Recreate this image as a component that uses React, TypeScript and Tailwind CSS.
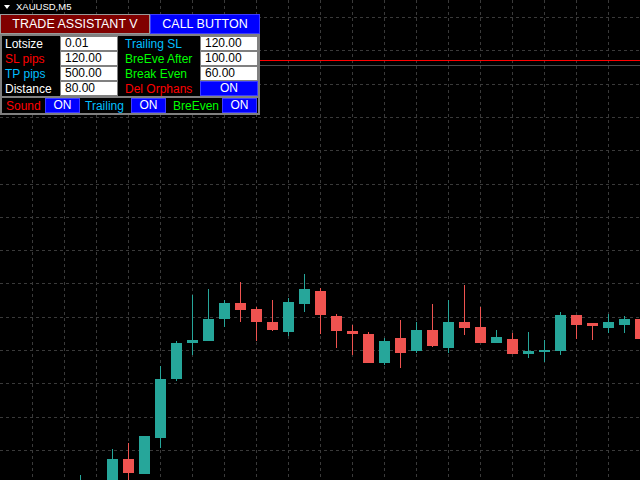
import React from 'react';

type Candle = [number, number, number, number, number, boolean];

// cx, wickTop, bodyTop, bodyBottom, wickBottom, bullish
const candles: Candle[] = [
  [80, 475, 480, 480, 480, true],
  [112, 449, 459, 480, 480, true],
  [128, 443, 459, 473, 480, false],
  [144, 436, 436, 474, 474, true],
  [160, 366, 379, 438, 448, true],
  [176, 341, 343, 379, 381, true],
  [192, 295, 340, 343, 355, true],
  [208, 289, 319, 341, 341, true],
  [224, 300, 303, 319, 327, true],
  [240, 282, 303, 310, 322, false],
  [256, 307, 309, 322, 341, false],
  [272, 300, 322, 330, 331, false],
  [288, 298, 302, 332, 336, true],
  [304, 274, 289, 304, 312, true],
  [320, 288, 291, 315, 334, false],
  [336, 314, 316, 331, 348, false],
  [352, 325, 331, 334, 355, false],
  [368, 332, 334, 363, 363, false],
  [384, 338, 341, 363, 365, true],
  [400, 320, 338, 353, 368, false],
  [416, 322, 330, 351, 353, true],
  [432, 304, 330, 346, 347, false],
  [448, 300, 322, 348, 353, true],
  [464, 285, 322, 328, 335, false],
  [480, 307, 327, 343, 343, false],
  [496, 330, 337, 343, 343, true],
  [512, 333, 339, 354, 354, false],
  [528, 332, 351, 354, 358, true],
  [544, 340, 350, 352, 362, true],
  [560, 312, 315, 351, 355, true],
  [576, 315, 315, 325, 339, false],
  [592, 323, 323, 326, 340, false],
  [608, 314, 322, 328, 333, true],
  [624, 316, 319, 325, 333, true],
  [640, 319, 319, 339, 339, false],
];

const Chart = () => {
  const vLines = Array.from({ length: 19 }, (_, i) => 32 * (i + 1) + 0.5);
  const hLines = Array.from({ length: 14 }, (_, i) => Math.round(17 + i * 33.3) + 0.5);
  return (
    <svg className="absolute inset-0" width={640} height={480} viewBox="0 0 640 480">
      {vLines.map((x) => (
        <line key={'v' + x} x1={x} y1={0} x2={x} y2={480} stroke="#3a3a3a" strokeDasharray="3 3" />
      ))}
      {hLines.map((y) => (
        <line key={'h' + y} x1={0} y1={y} x2={640} y2={y} stroke="#3a3a3a" strokeDasharray="3 3" />
      ))}
      <line x1={0} y1={65.5} x2={640} y2={65.5} stroke="#4a4a4a" />
      <line x1={260} y1={60.5} x2={640} y2={60.5} stroke="#ff0000" />
      {candles.map(([cx, wt, bt, bb, wb, up]) => {
        const fill = up ? '#26a69a' : '#ef5350';
        return (
          <g key={cx}>
            <rect x={cx} y={wt} width={1} height={Math.max(wb - wt, 1)} fill={fill} />
            <rect x={cx - 5} y={bt} width={11} height={Math.max(bb - bt, 2)} fill={fill} />
          </g>
        );
      })}
    </svg>
  );
};

const Field = ({ value }: { value: string }) => (
  <div className="w-[58px] h-[15px] bg-white border border-[#808080] pl-[4px] text-black leading-[13px]">
    {value}
  </div>
);

const OnButton = ({ w }: { w: string }) => (
  <div className={`${w} h-[15px] bg-[#0000ff] border border-[#3c3cff] text-white text-center leading-[13px]`}>
    ON
  </div>
);

const Row = ({
  left,
  leftColor,
  leftValue,
  right,
  rightColor,
  rightEl,
}: {
  left: string;
  leftColor: string;
  leftValue: string;
  right: string;
  rightColor: string;
  rightEl: React.ReactNode;
}) => (
  <div className="flex items-center h-[15px]">
    <div className={`w-[58px] pl-[3px] ${leftColor}`}>{left}</div>
    <Field value={leftValue} />
    <div className={`w-[82px] pl-[7px] ${rightColor}`}>{right}</div>
    {rightEl}
  </div>
);

export default function App() {
  return (
    <div
      className="relative w-[640px] h-[480px] bg-black overflow-hidden"
      style={{ fontFamily: '"Liberation Sans", Arial, sans-serif' }}
    >
      <Chart />

      <div className="absolute top-0 left-0 w-[260px] text-[12px]">
        <div className="h-[14px] flex items-center gap-[6px] pl-[4px] text-white text-[9.5px]">
          <svg width="6" height="4" viewBox="0 0 6 4">
            <path d="M0 0 L6 0 L3 4 Z" fill="#ffffff" />
          </svg>
          <span>XAUUSD,M5</span>
        </div>

        <div className="flex h-[20px] text-white text-[12.5px]">
          <div className="w-[150px] bg-[#800000] border border-[#9a9a9a] flex items-center justify-center">
            TRADE ASSISTANT V
          </div>
          <div className="w-[110px] bg-[#0000ff] border border-[#3c3cff] flex items-center justify-center">
            CALL BUTTON
          </div>
        </div>

        <div className="bg-black border-2 border-[#808080]">
          <div className="flex flex-col gap-0 pt-[0px]">
            <Row
              left="Lotsize"
              leftColor="text-white"
              leftValue="0.01"
              right="Trailing SL"
              rightColor="text-[#00bfff]"
              rightEl={<Field value="120.00" />}
            />
            <Row
              left="SL pips"
              leftColor="text-[#ff0000]"
              leftValue="120.00"
              right="BreEve After"
              rightColor="text-[#00ff00]"
              rightEl={<Field value="100.00" />}
            />
            <Row
              left="TP pips"
              leftColor="text-[#00bfff]"
              leftValue="500.00"
              right="Break Even"
              rightColor="text-[#00ff00]"
              rightEl={<Field value="60.00" />}
            />
            <Row
              left="Distance"
              leftColor="text-white"
              leftValue="80.00"
              right="Del Orphans"
              rightColor="text-[#ff0000]"
              rightEl={<OnButton w="w-[58px]" />}
            />
          </div>
          <div className="h-[2px] bg-[#808080]" />
          <div className="flex items-center h-[15px]">
            <div className="w-[43px] pl-[4px] text-[#ff0000]">Sound</div>
            <OnButton w="w-[35px]" />
            <div className="w-[51px] pl-[5px] text-[#00bfff]">Trailing</div>
            <OnButton w="w-[35px]" />
            <div className="w-[56px] pl-[7px] text-[#00ff00]">BreEven</div>
            <OnButton w="w-[35px]" />
          </div>
        </div>
      </div>
    </div>
  );
}
